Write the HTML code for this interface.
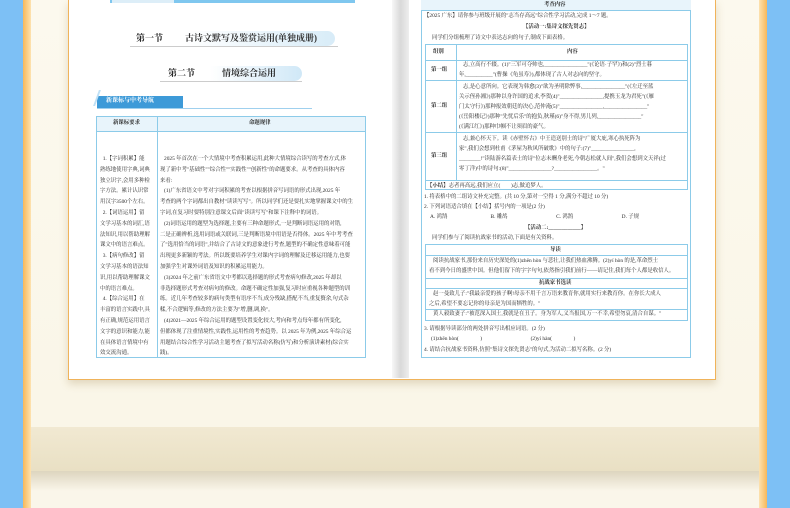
<!DOCTYPE html>
<html><head><meta charset="utf-8"><style>
*{margin:0;padding:0;box-sizing:border-box}
body{width:790px;height:508px;overflow:hidden;position:relative;background:#fbf7ea;font-family:"Liberation Serif","Noto Serif CJK SC",serif;color:#333}
.a{position:absolute}
.t{position:absolute;font-size:5.4px;line-height:11px;white-space:nowrap;color:#2a2a2a}
.b{font-weight:bold}
</style></head><body>
<div class="a" style="left:0;top:0;width:23px;height:508px;background:#7dc0f5"></div>
<div class="a" style="left:767px;top:0;width:23px;height:508px;background:#7dc0f5"></div>
<div class="a" style="left:23px;top:0;width:8px;height:508px;background:linear-gradient(90deg,#f7b85a,#fde2b0)"></div>
<div class="a" style="left:759px;top:0;width:8px;height:508px;background:linear-gradient(90deg,#fde2b0,#f7b85a)"></div>
<div class="a" style="left:31px;top:0;width:728px;height:508px;background:linear-gradient(#fcf9ee 0,#faf6e8 420px)"></div>
<div class="a" style="left:31px;top:427px;width:728px;height:44px;background:linear-gradient(#f1e9d2,#e9e0c4)"></div>
<div class="a" style="left:31px;top:471px;width:728px;height:37px;background:linear-gradient(#ddd5bf,#faf6ea 20px)"></div>

<!-- book -->
<div class="a" style="left:68px;top:0;width:648px;height:380px;background:#fff;border:1.5px solid #f0b35a;border-top:none;box-shadow:0 4px 8px rgba(150,120,60,.25)"></div>
<div class="a" style="left:392px;top:0;width:17px;height:378px;background:linear-gradient(90deg,#f7f7f7,#d9d9d9 50%,#eee)"></div>

<!-- left page -->
<div class="a" style="left:110px;top:0;width:245px;height:3px;background:#7fc7ef"></div>
<div class="a" style="left:112px;top:0;width:62px;height:3px;background:#ddeef8"></div>
<div class="a" style="left:185px;top:31px;width:150px;height:15px;background:linear-gradient(90deg,#fff,#d8ecf8);border-radius:0 8px 8px 0"></div>
<div class="t b" style="left:136px;top:33px;font-size:9px">第一节</div>
<div class="t b" style="left:185px;top:33px;font-size:9px;color:#333">古诗文默写及鉴赏运用(单独成册)</div>
<div class="a" style="left:130px;top:46px;width:208px;height:1px;background:#ccc"></div>
<div class="a" style="left:210px;top:66px;width:92px;height:15px;background:linear-gradient(90deg,#fff,#d0e8f7);border-radius:0 8px 8px 0"></div>
<div class="t b" style="left:168px;top:68px;font-size:9px">第二节</div>
<div class="t b" style="left:222px;top:68px;font-size:9px">情境综合运用</div>
<div class="a" style="left:160px;top:81px;width:142px;height:1px;background:#ccc"></div>
<div class="a" style="left:97px;top:96px;width:86px;height:12px;background:#3d9ad8"></div>
<div class="a" style="left:96px;top:90px;width:7px;height:16px;border-left:2px solid #bfe0f5;transform:skewX(-20deg)"></div>
<div class="t b" style="left:106px;top:96px;font-size:6px;color:#fff">新课标与中考导航</div>
<div class="a" style="left:97px;top:108px;width:215px;height:1px;background:#9fd0ee"></div>
<div class="a" style="left:96px;top:116px;width:270px;height:242px;border:1px solid #8ccbe9"></div>
<div class="a" style="left:96px;top:116px;width:270px;height:16px;background:#e8f4fb;border:1px solid #8ccbe9"></div>
<div class="a" style="left:157px;top:116px;width:1px;height:242px;background:#8ccbe9"></div>
<div class="t b" style="left:113px;top:118px">新课标要求</div>
<div class="t b" style="left:249px;top:118px">命题规律</div>
<div class="t" style="left:100px;top:154px;line-height:10.8px">&nbsp;&nbsp;1.【字词积累】能<br>熟练地使用字典,词典<br>独立识字,会用多种检<br>字方法。累计认识常<br>用汉字3500个左右。<br>&nbsp;&nbsp;2.【词语运用】留<br>文学习基本的词汇,语<br>法知识,用以帮助理解<br>课文中的语言难点。<br>&nbsp;&nbsp;3.【病句修改】留<br>文学习基本的语法知<br>识,用以帮助理解课文<br>中的语言难点。<br>&nbsp;&nbsp;4.【综合运用】在<br>丰富的语言实践中,具<br>有正确,规范运用语言<br>文字的意识和能力,能<br>在具体语言情境中有<br>效交流沟通。</div>
<div class="t" style="left:160px;top:154px;line-height:10.8px">&nbsp;&nbsp;&nbsp;2025 年首次在一个大情境中考查积累运用,此种大情境综合读写的考查方式,体<br>现了新中考"基础性""综合性""实践性""创新性"的命题要求。从考查的具体内容<br>来看:<br>&nbsp;&nbsp;&nbsp;(1)广东省语文中考对字词积累的考查以根据拼音写词语的形式出现,2025 年<br>考查的两个字词都出自教材"读读写写"。所以同学们还是要扎实地掌握课文中的生<br>字词,在复习时要特别注意课文后面"读读写写"和课下注释中的词语。<br>&nbsp;&nbsp;&nbsp;(2)词语运用的题型为选择题,主要有三种命题形式,一是判断词语运用的对错,<br>二是正确辨析,选用词语或关联词,三是判断语境中用语是否得体。2025 年中考考查<br>了"选用恰当的词语",并结合了古诗文的意象进行考查,题型的不确定性意味着可能<br>出现更多新颖的考法。所以既要培养学生对课内字词的理解及迁移运用能力,也要<br>加强学生对课外词语及知识的积累运用能力。<br>&nbsp;&nbsp;&nbsp;(3)2024 年之前广东省语文中考都以选择题的形式考查病句修改,2025 年却以<br>非选择题形式考查对病句的修改。命题不确定性加强,复习时应重视各种题型的训<br>练。近几年考查较多的病句类型有语序不当,成分残缺,搭配不当,重复赘余,句式杂<br>糅,不合逻辑等,修改的方法主要为"增,删,调,换"。<br>&nbsp;&nbsp;&nbsp;(4)2021—2025 年综合运用的题型设置变化较大,考向和考点每年都有所变化,<br>但都体现了注重情境性,实践性,运用性的考查趋势。以 2025 年为例,2025 年综合运<br>用题结合综合性学习活动主题考查了拟写活动名称(仿写)和分析演讲素材(综合实<br>践)。</div>

<!-- right page -->
<div class="a" style="left:421px;top:0;width:270px;height:358px;border:1px solid #8ccbe9;border-top:none"></div>
<div class="a" style="left:421px;top:0;width:270px;height:11px;background:#e8f4fb;border-bottom:1px solid #8ccbe9"></div>
<div class="t b" style="left:544px;top:0">考查内容</div>
<div class="t" style="left:424px;top:11px">【2025 广东】请你参与班级开展的"志当存高远"综合性学习活动,完成 1～7 题。</div>
<div class="t b" style="left:523px;top:22px">【活动一:集诗文探先贤志】</div>
<div class="t" style="left:432px;top:33px">同学们分组梳理了诗文中表达志向的句子,制成下面表格。</div>
<div class="a" style="left:425px;top:44px;width:263px;height:146px;border:1px solid #8ccbe9"></div>
<div class="a" style="left:425px;top:60px;width:263px;height:1px;background:#8ccbe9"></div>
<div class="a" style="left:425px;top:80px;width:263px;height:1px;background:#8ccbe9"></div>
<div class="a" style="left:425px;top:132px;width:263px;height:1px;background:#8ccbe9"></div>
<div class="a" style="left:425px;top:180px;width:263px;height:1px;background:#8ccbe9"></div>
<div class="a" style="left:456px;top:44px;width:1px;height:136px;background:#8ccbe9"></div>
<div class="t b" style="left:433px;top:47px">组别</div>
<div class="t b" style="left:567px;top:47px">内容</div>
<div class="t b" style="left:431px;top:65px">第一组</div>
<div class="t b" style="left:431px;top:101px">第二组</div>
<div class="t b" style="left:431px;top:151px">第三组</div>
<div class="t" style="left:459px;top:60px;line-height:10px">&nbsp;&nbsp;&nbsp;志,立高行不辍。(1)"三军可夺帅也,________________"(《论语·子罕》)和(2)"烈士暮<br>年,__________"(曹操《龟虽寿》),都体现了古人对志向的坚守。</div>
<div class="t" style="left:459px;top:82px;line-height:10px">&nbsp;&nbsp;&nbsp;志,是心意所向。它表现为韩愈(3)"欲为圣明除弊事,________________"(《左迁至蓝<br>关示侄孙湘》)那种以身许国的追求,李贺(4)"________________,提携玉龙为君死"(《雁<br>门太守行》)那种报效朝廷的决心,范仲淹(5)"________________,________________"<br>(《岳阳楼记》)那种"先忧后乐"的抱负,秋瑾(6)"身不得,男儿列,________________"<br>(《满江红》)那种巾帼不让须眉的豪气。</div>
<div class="t" style="left:459px;top:134px;line-height:10px">&nbsp;&nbsp;&nbsp;志,兼心怀天下。读《赤壁怀古》中王造送别士的诗"广厦大庇,寒心执死阵为<br>家",我们会想到杜甫《茅屋为秋风所破歌》中的句子:(7)"________________,<br>________!"读陆游名篇表士的诗"位志未酬身老死,今朝志松就人间",我们会想到文天祥(过<br>零丁洋)中的诗句:(8)"________________?________________。"</div>
<div class="t" style="left:427px;top:181px"><b>【小结】</b>志者再高远,我们应立(　　)志,做追梦人。</div>
<div class="t" style="left:424px;top:192px">1. 将表格中的二组诗文补充完整。(共 10 分,第对一空得 1 分,满分不超过 10 分)</div>
<div class="t" style="left:424px;top:202px">2. 下列词语适合填在【小结】括号内的一项是(2 分)</div>
<div class="t" style="left:430px;top:212px">A. 鸿鹄　　　　　　　　B. 雕鸪　　　　　　　　　C. 鸿鹄　　　　　　　　　D. 子规</div>
<div class="t b" style="left:525px;top:223px">【活动二:____________】</div>
<div class="t" style="left:432px;top:233px">同学们参与了阅读抗战家书的活动,下面是有关资料。</div>
<div class="a" style="left:425px;top:244px;width:263px;height:77px;border:1px solid #8ccbe9"></div>
<div class="a" style="left:425px;top:255px;width:263px;height:1px;background:#8ccbe9"></div>
<div class="a" style="left:425px;top:278px;width:263px;height:1px;background:#8ccbe9"></div>
<div class="a" style="left:425px;top:288px;width:263px;height:1px;background:#8ccbe9"></div>
<div class="a" style="left:425px;top:309px;width:263px;height:1px;background:#8ccbe9"></div>
<div class="t b" style="left:550px;top:245px">导读</div>
<div class="t" style="left:429px;top:256px;line-height:10px">&nbsp;&nbsp;&nbsp;阅读抗战家书,那份来自历史深处的(1)zhēn hòn 与悲壮,让我们热血沸腾。(2)yí hòn 的是,革命烈士<br>看不到今日的盛世中国。但他们留下的字字句句,依然指引我们前行——请记住,我们每个人都是收信人。</div>
<div class="t b" style="left:539px;top:278px">抗战家书选读</div>
<div class="t" style="left:429px;top:289px;line-height:10px">&nbsp;&nbsp;&nbsp;赵一曼致儿子:"我最亲爱的孩子啊!母亲不用千言万语来教育你,就用实行来教育你。在你长大成人<br>之后,希望不要忘记你的母亲是为国而牺牲的。"</div>
<div class="t" style="left:429px;top:309px;line-height:10px">&nbsp;&nbsp;&nbsp;黄人毅致妻子:"被范深入国土,我就是在丑子。身为军人,义当报国,万一不幸,希望勿哀,清合自谋。"</div>
<div class="t" style="left:424px;top:324px">3. 请根据导读部分的两处拼音写出相应词语。(2 分)</div>
<div class="t" style="left:431px;top:334px">(1)zhēn hòn(　　　　)　　　　　　　　　(2)yí hàn(　　　　)</div>
<div class="t" style="left:424px;top:345px">4. 请结合抗战家书资料,仿照"集诗文探先贤志"的句式,为活动二拟写名称。(2 分)</div>
</body></html>
